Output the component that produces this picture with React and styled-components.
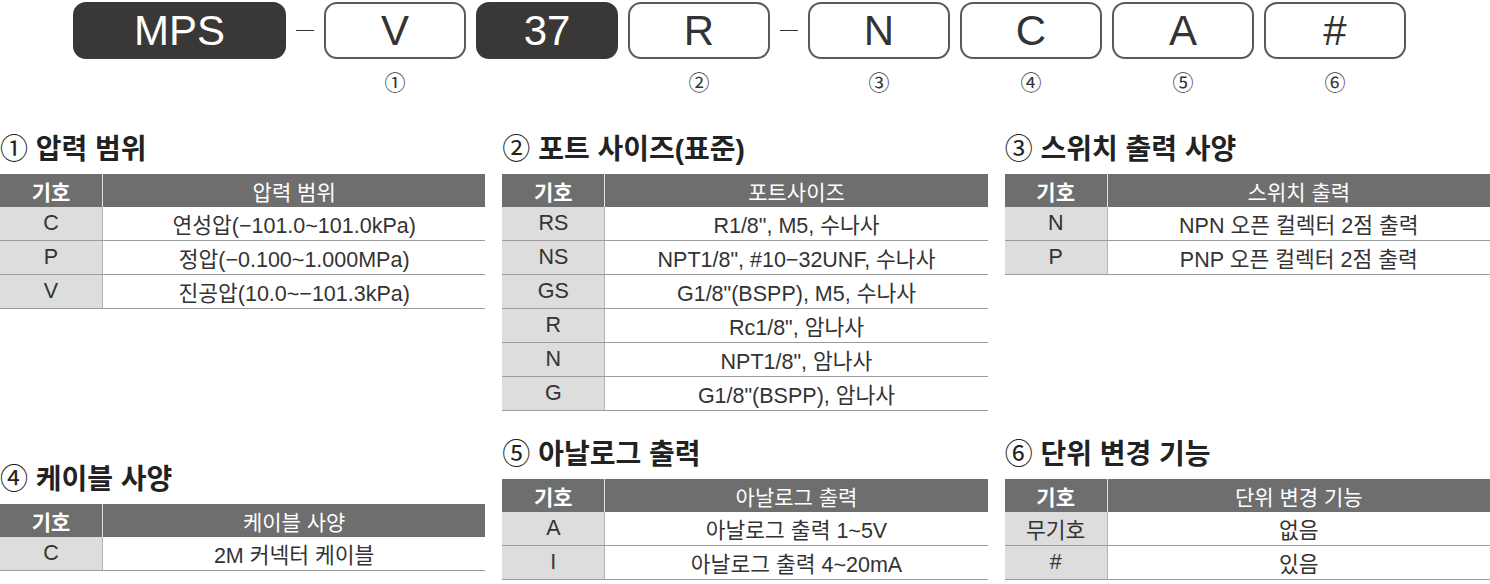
import React from "react";
import styled, { createGlobalStyle } from "styled-components";

const GlobalStyle = createGlobalStyle`
  body {
    margin: 0;
    background: #fff;
    font-family: "Liberation Sans", "Noto Sans CJK KR", sans-serif;
    color: #333;
  }
`;

const codes = [
  { text: "MPS", dark: true, wide: true },
  { dash: true },
  { text: "V", label: "①" },
  { text: "37", dark: true },
  { text: "R", label: "②" },
  { dash: true },
  { text: "N", label: "③" },
  { text: "C", label: "④" },
  { text: "A", label: "⑤" },
  { text: "#", label: "⑥" },
];

const sections = [
  {
    num: "①",
    title: "압력 범위",
    head: "압력 범위",
    rows: [
      ["C", "연성압(−101.0~101.0kPa)"],
      ["P", "정압(−0.100~1.000MPa)"],
      ["V", "진공압(10.0~−101.3kPa)"],
    ],
  },
  {
    num: "②",
    title: "포트 사이즈(표준)",
    head: "포트사이즈",
    rows: [
      ["RS", 'R1/8", M5, 수나사'],
      ["NS", 'NPT1/8", #10−32UNF, 수나사'],
      ["GS", 'G1/8"(BSPP), M5, 수나사'],
      ["R", 'Rc1/8", 암나사'],
      ["N", 'NPT1/8", 암나사'],
      ["G", 'G1/8"(BSPP), 암나사'],
    ],
  },
  {
    num: "③",
    title: "스위치 출력 사양",
    head: "스위치 출력",
    rows: [
      ["N", "NPN 오픈 컬렉터 2점 출력"],
      ["P", "PNP 오픈 컬렉터 2점 출력"],
    ],
  },
  {
    num: "④",
    title: "케이블 사양",
    head: "케이블 사양",
    rows: [["C", "2M 커넥터 케이블"]],
    offset: true,
  },
  {
    num: "⑤",
    title: "아날로그 출력",
    head: "아날로그 출력",
    rows: [
      ["A", "아날로그 출력 1~5V"],
      ["I", "아날로그 출력 4~20mA"],
    ],
  },
  {
    num: "⑥",
    title: "단위 변경 기능",
    head: "단위 변경 기능",
    rows: [
      ["무기호", "없음"],
      ["#", "있음"],
    ],
  },
];

const App = () => {
  return (
    <Page>
      <GlobalStyle />
      <CodeBar>
        {codes.map((c, i) =>
          c.dash ? (
            <Dash key={i} />
          ) : (
            <CodeItem key={i}>
              <CodeBox $dark={c.dark} $wide={c.wide}>
                {c.text}
              </CodeBox>
              <CodeLabel>{c.label}</CodeLabel>
            </CodeItem>
          )
        )}
      </CodeBar>
      <Grid>
        {sections.map((s) => (
          <Section key={s.title} $offset={s.offset}>
            <Title>
              <Num>{s.num}</Num> {s.title}
            </Title>
            <Table>
              <HeadRow>
                <HeadKey>기호</HeadKey>
                <HeadValue>{s.head}</HeadValue>
              </HeadRow>
              {s.rows.map(([k, v]) => (
                <Row key={k}>
                  <Key>{k}</Key>
                  <Value>{v}</Value>
                </Row>
              ))}
            </Table>
          </Section>
        ))}
      </Grid>
    </Page>
  );
};

const Page = styled.div`
  width: 1490px;
  padding-top: 2px;
`;

const CodeBar = styled.div`
  display: flex;
  gap: 10px;
  padding-left: 73px;
`;

const CodeItem = styled.div`
  display: flex;
  flex-direction: column;
  align-items: center;
`;

const CodeBox = styled.div`
  width: ${(p) => (p.$wide ? "213px" : "142px")};
  height: 57px;
  box-sizing: border-box;
  border-radius: 13px;
  display: flex;
  align-items: center;
  justify-content: center;
  font-family: "Liberation Sans", sans-serif;
  font-size: 42px;
  background: ${(p) => (p.$dark ? "#3a3836" : "#fff")};
  color: ${(p) => (p.$dark ? "#fff" : "#333")};
  border: 2px solid ${(p) => (p.$dark ? "#3a3836" : "#5a5a5a")};
`;

const CodeLabel = styled.div`
  margin-top: 11px;
  height: 22px;
  line-height: 22px;
  font-size: 21px;
  font-family: "Noto Sans CJK KR", sans-serif;
  color: #333;
`;

const Dash = styled.div`
  height: 57px;
  display: flex;
  align-items: center;
  &::before {
    content: "";
    width: 18px;
    height: 1.5px;
    background: #333;
  }
`;

const Grid = styled.div`
  margin-top: 38px;
  display: grid;
  grid-template-columns: repeat(3, 1fr);
  column-gap: 17px;
  row-gap: 24px;
  align-items: start;
`;

const Section = styled.div`
  margin-top: ${(p) => (p.$offset ? "25px" : "0")};
`;

const Title = styled.div`
  height: 34px;
  line-height: 34px;
  margin-bottom: 10px;
  font-size: 28px;
  font-weight: 700;
  color: #222;
  white-space: nowrap;
`;

const Num = styled.span`
  font-family: "Noto Sans CJK KR", sans-serif;
  font-weight: 400;
`;

const Table = styled.div`
  display: flex;
  flex-direction: column;
`;

const HeadRow = styled.div`
  display: flex;
  height: 33px;
  background: #6e6e6e;
  color: #fff;
  font-size: 21px;
`;

const HeadKey = styled.div`
  width: 103px;
  box-sizing: border-box;
  border-right: 1.5px solid #e2e2e2;
  display: flex;
  align-items: center;
  justify-content: center;
  font-weight: 700;
`;

const HeadValue = styled.div`
  flex: 1;
  display: flex;
  align-items: center;
  justify-content: center;
`;

const Row = styled.div`
  display: flex;
  height: 34px;
  box-sizing: border-box;
  border-bottom: 1px solid #9c9c9c;
  font-size: 21.5px;
  color: #333;
`;

const Key = styled.div`
  width: 103px;
  box-sizing: border-box;
  background: #dcdddc;
  border-right: 1.5px solid #b4b4b4;
  display: flex;
  align-items: center;
  justify-content: center;
`;

const Value = styled.div`
  flex: 1;
  display: flex;
  align-items: center;
  justify-content: center;
  white-space: nowrap;
`;

export default App;
